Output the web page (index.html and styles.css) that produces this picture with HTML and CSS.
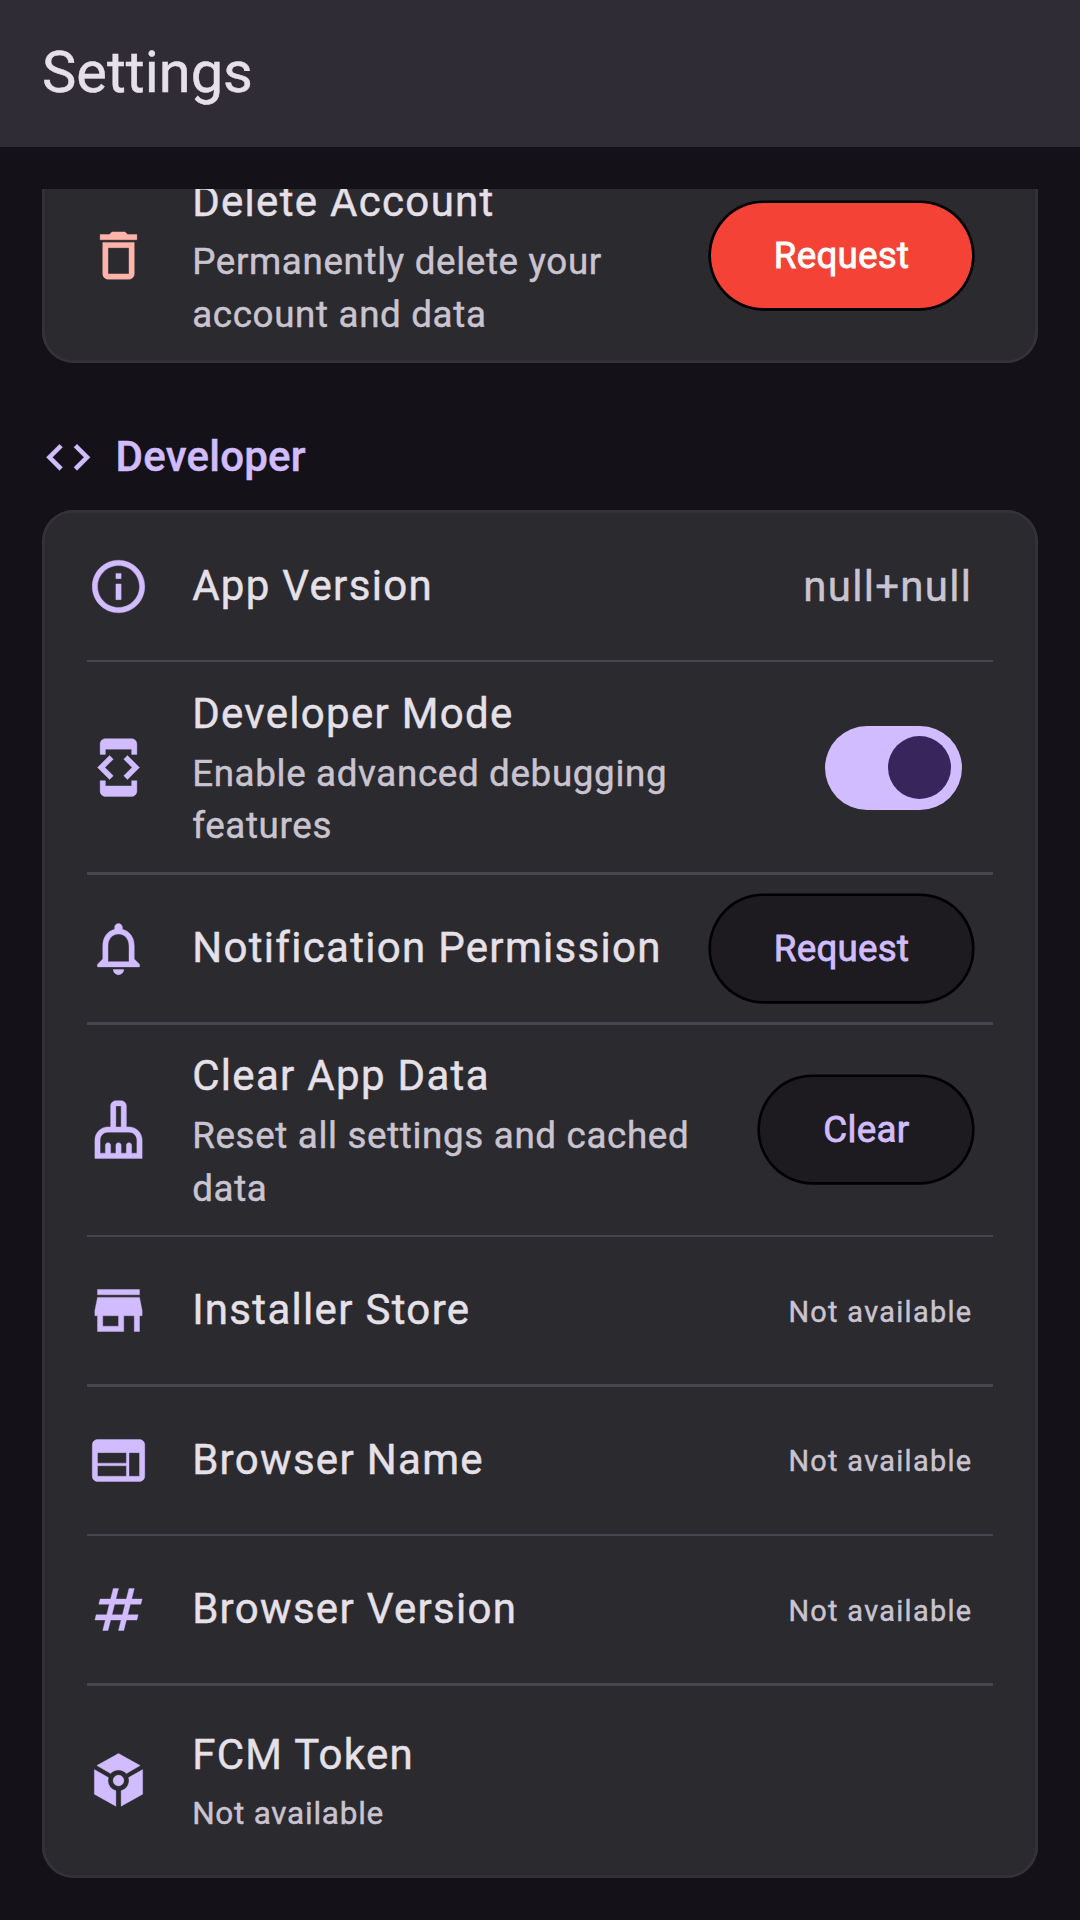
FILE: index.html
```html
<!DOCTYPE html>
<html lang="en">
<head>
<meta charset="utf-8">
<title>Settings</title>
<link rel="stylesheet" href="styles.css">
</head>
<body>
<header class="app-bar"><h1>Settings</h1></header>
<main class="scroll">
  <section class="card card-account">
    <div class="tile three">
      <svg class="icon danger" viewBox="0 0 24 24"><path d="M16 9v10H8V9h8m-1.500-6h-5l-1 1H5v2h14V4h-3.500l-1-1zM18 7H6v12c0 1.100.9 2 2 2h8c1.100 0 2-.9 2-2V7z"/></svg>
      <div class="text"><div class="title">Delete Account</div><div class="sub">Permanently delete your<br>account and data</div></div>
      <button class="btn btn-danger">Request</button>
    </div>
  </section>

  <h2 class="section">
    <svg class="icon small" viewBox="0 0 24 24"><path d="M9.400 16.600L4.800 12l4.600-4.600L8 6l-6 6 6 6 1.400-1.400zm5.200 0l4.600-4.600-4.600-4.600L16 6l6 6-6 6-1.400-1.400z"/></svg>
    <span>Developer</span>
  </h2>

  <section class="card">
    <div class="tile">
      <svg class="icon" viewBox="0 0 24 24"><path d="M11 7h2v2h-2zm0 4h2v6h-2zm1-9C6.480 2 2 6.480 2 12s4.480 10 10 10 10-4.480 10-10S17.520 2 12 2zm0 18c-4.410 0-8-3.590-8-8s3.590-8 8-8 8 3.590 8 8-3.590 8-8 8z"/></svg>
      <div class="text"><div class="title">App Version</div></div>
      <span class="value">null+null</span>
    </div>
    <hr>
    <div class="tile three">
      <svg class="icon" viewBox="0 0 24 24"><path d="M7 5h10v2h2V3c0-1.100-.9-1.990-2-1.990L7 1c-1.100 0-2 .9-2 2v4h2V5zm8.410 11.590L20 12l-4.590-4.590L14 8.830 17.170 12 14 15.170l1.410 1.420zM10 15.170L6.830 12 10 8.830 8.590 7.410 4 12l4.590 4.590L10 15.170zM17 19H7v-2H5v4c0 1.100.9 2 2 2h10c1.100 0 2-.9 2-2v-4h-2v2z"/></svg>
      <div class="text"><div class="title">Developer Mode</div><div class="sub">Enable advanced debugging<br>features</div></div>
      <span class="switch"><span class="thumb"></span></span>
    </div>
    <hr>
    <div class="tile">
      <svg class="icon" viewBox="0 0 24 24"><path d="M12 22c1.100 0 2-.9 2-2h-4c0 1.100.9 2 2 2zm6-6v-5c0-3.070-1.630-5.640-4.500-6.320V4c0-.830-.670-1.500-1.500-1.500s-1.500.670-1.500 1.500v.680C7.640 5.360 6 7.920 6 11v5l-2 2v1h16v-1l-2-2zm-2 1H8v-6c0-2.480 1.510-4.500 4-4.500s4 2.020 4 4.500v6z"/></svg>
      <div class="text"><div class="title">Notification Permission</div></div>
      <button class="btn">Request</button>
    </div>
    <hr>
    <div class="tile three">
      <svg class="icon" viewBox="0 0 24 24"><path d="M16 11h-1V3c0-1.100-.9-2-2-2h-2c-1.100 0-2 .9-2 2v8H8c-2.760 0-5 2.240-5 5v7h18v-7c0-2.760-2.240-5-5-5zm-5-8h2v8h-2V3zm8 18h-2v-3c0-.550-.450-1-1-1s-1 .450-1 1v3h-2v-3c0-.550-.450-1-1-1s-1 .450-1 1v3H9v-3c0-.550-.450-1-1-1s-1 .450-1 1v3H5v-5c0-1.650 1.350-3 3-3h8c1.650 0 3 1.350 3 3v5z"/></svg>
      <div class="text"><div class="title">Clear App Data</div><div class="sub">Reset all settings and cached<br>data</div></div>
      <button class="btn">Clear</button>
    </div>
    <hr>
    <div class="tile">
      <svg class="icon" viewBox="0 0 24 24"><path d="M20 4H4v2h16V4zm1 10v-2l-1-5H4l-1 5v2h1v6h10v-6h4v6h2v-6h1zm-9 4H6v-4h6v4z"/></svg>
      <div class="text"><div class="title">Installer Store</div></div>
      <span class="value tiny">Not available</span>
    </div>
    <hr>
    <div class="tile">
      <svg class="icon" viewBox="0 0 24 24"><path d="M20 4H4c-1.100 0-1.990.9-1.990 2L2 18c0 1.100.9 2 2 2h16c1.100 0 2-.9 2-2V6c0-1.100-.9-2-2-2zm-5 14H4v-4h11v4zm0-5H4V9h11v4zm5 5h-4V9h4v9z"/></svg>
      <div class="text"><div class="title">Browser Name</div></div>
      <span class="value tiny">Not available</span>
    </div>
    <hr>
    <div class="tile">
      <svg class="icon" viewBox="0 0 24 24"><path d="M20.500 10L21 8h-4l1-4h-2l-1 4h-4l1-4h-2L9 8H5l-.5 2h4l-1 4h-4L3 16h4l-1 4h2l1-4h4l-1 4h2l1-4h4l.5-2h-4l1-4zM13.500 14h-4l1-4h4z"/></svg>
      <div class="text"><div class="title">Browser Version</div></div>
      <span class="value tiny">Not available</span>
    </div>
    <hr>
    <div class="tile token">
      <svg class="icon" viewBox="0 0 24 24"><path d="M12 1.700L20.250 6.280 15 9.350C14.250 8.520 13.200 8 12 8s-2.250.520-3 1.350L3.750 6.280zM2.800 7.850L8.150 10.900C8.050 11.250 8 11.620 8 12c0 1.860 1.270 3.430 3 3.870v5.930l-8.200-4.600zM21.200 7.850v9.350L13 21.800v-5.930c1.730-.440 3-2.010 3-3.870 0-.380-.050-.750-.150-1.100z"/><circle cx="12" cy="12" r="2.050"/></svg>
      <div class="text"><div class="title">FCM Token</div><div class="sub caption">Not available</div></div>
    </div>
  </section>
</main>
</body>
</html>
```

FILE: styles.css
```css
* { box-sizing: border-box; }

body {
  margin: 0;
  height: 1920px;
  overflow: hidden;
  background: #141118;
  color: #e6e0e9;
  font-family: Roboto, sans-serif;
  -webkit-text-stroke: 0.45px currentColor;
}

.app-bar {
  height: 147px;
  padding: 0 42px;
  display: flex;
  align-items: center;
  background: #2f2c35;
}

.app-bar h1 {
  margin: 0;
  padding-bottom: 1px;
  font-size: 57.75px;
  line-height: 73.5px;
  font-weight: 400;
}

/* Scrolled list: its top edge cuts the account card */
.scroll {
  height: 1731px;
  margin-top: 42px;
  padding: 0 42px;
  overflow: hidden;
}

.card {
  padding: 2.625px;
  border-radius: 31.5px;
  background: #2b2a2f;
  box-shadow: inset 0 0 0 2.625px #353339;
}

.card-account {
  margin-top: -80px;
  padding-top: 41.7px;
}

.section {
  display: flex;
  align-items: center;
  gap: 21px;
  height: 63px;
  margin: 62.700px 0 21px;
  color: #d0bcff;
  font-size: 42px;
  line-height: 63px;
  font-weight: 500;
  letter-spacing: 0.25px;
}

.section span { padding-bottom: 2px; }

.tile {
  display: flex;
  align-items: center;
  height: 147px;
  padding: 0 63px 0 42px;
}

.tile.three { height: 210px; }
.tile.token { height: 189px; }

.icon {
  width: 63px;
  height: 63px;
  flex: none;
  fill: #d0bcff;
  stroke: #d0bcff;
  stroke-width: 0.15px;
}

.icon.small { width: 52.5px; height: 52.5px; }
.icon.danger { fill: #ffb4ab; stroke: #ffb4ab; }

.text {
  flex: 1;
  margin-left: 42.5px;
  padding-bottom: 2px;
  white-space: nowrap;
}

.title {
  font-size: 42px;
  line-height: 63px;
  letter-spacing: 1.3125px;
}

.three .text { padding-bottom: 0; }

.sub {
  margin-top: 3.2px;
  color: #cac4d0;
  font-size: 36.75px;
  line-height: 52.5px;
  letter-spacing: 0.656px;
}

.sub.caption {
  margin-top: 6.5px;
  font-size: 31.5px;
  line-height: 42px;
  letter-spacing: 0.75px;
}

.token .text { padding-bottom: 3px; }

hr {
  height: 2.625px;
  margin: 0 42px;
  border: 0;
  background: #49454f;
}

.value {
  color: #cac4d0;
  font-size: 42px;
  line-height: 63px;
  letter-spacing: 1.3125px;
}

.value.tiny {
  padding-top: 2px;
  font-size: 28.875px;
  line-height: 42px;
  letter-spacing: 1.3125px;
}

.btn {
  height: 105px;
  padding: 2px 63px 0;
  border: 0;
  border-radius: 52.5px;
  background: #1d1b20;
  box-shadow: 0 0 0 2.625px #000;
  color: #d0bcff;
  font: 400 36.75px/52.5px Roboto, sans-serif;
  letter-spacing: 0.2625px;
  -webkit-text-stroke: 0.8px currentColor;
}

.btn-danger {
  background: #f44336;
  color: #fff;
}

.switch {
  display: flex;
  align-items: center;
  justify-content: flex-end;
  width: 136.5px;
  height: 84px;
  margin: 1px 10.5px 0 0;
  padding-right: 10.5px;
  border-radius: 42px;
  background: #d0bcff;
}

.thumb {
  width: 63px;
  height: 63px;
  border-radius: 50%;
  background: #38255c;
}
```
